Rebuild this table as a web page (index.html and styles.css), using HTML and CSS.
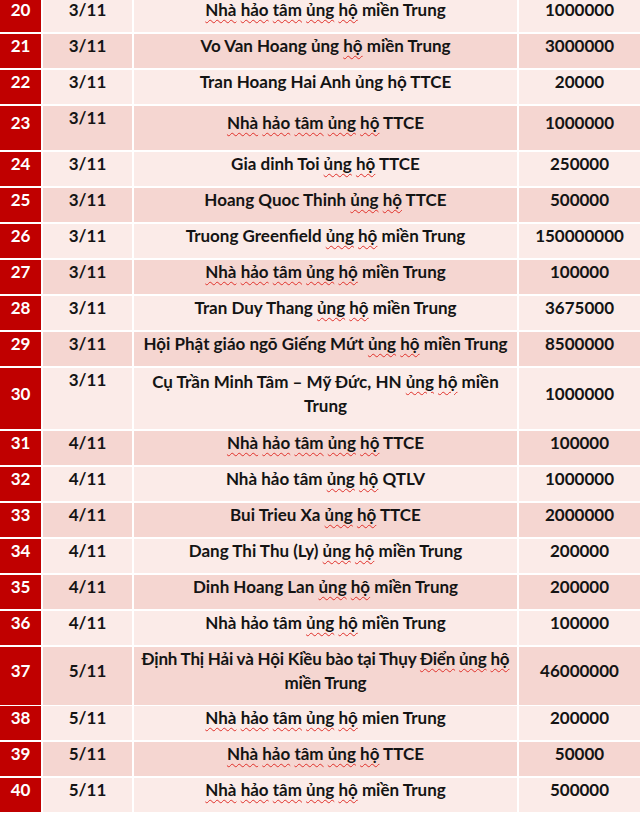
FILE: index.html
```html
<!DOCTYPE html>
<html lang="vi">
<head>
<meta charset="utf-8">
<title>Danh sách ủng hộ</title>
<link rel="stylesheet" href="styles.css">
</head>
<body>
<div class="table">
  <div class="row light"><div class="c no">20</div><div class="c">3/11</div><div class="c"><span><u>Nhà</u> <u>hảo</u> <u>tâm</u> <u>ủng</u> <u>hộ</u> miền Trung</span></div><div class="c">1000000</div></div>
  <div class="row dark"><div class="c no">21</div><div class="c">3/11</div><div class="c"><span>Vo Van Hoang ủng <u>hộ</u> miền Trung</span></div><div class="c">3000000</div></div>
  <div class="row light"><div class="c no">22</div><div class="c">3/11</div><div class="c"><span>Tran Hoang Hai Anh ủng hộ TTCE</span></div><div class="c">20000</div></div>
  <div class="row dark h44"><div class="c no">23</div><div class="c top">3/11</div><div class="c"><span><u>Nhà</u> <u>hảo</u> <u>tâm</u> <u>ủng</u> <u>hộ</u> TTCE</span></div><div class="c">1000000</div></div>
  <div class="row light"><div class="c no">24</div><div class="c">3/11</div><div class="c"><span>Gia dinh Toi <u>ủng</u> <u>hộ</u> TTCE</span></div><div class="c">250000</div></div>
  <div class="row dark"><div class="c no">25</div><div class="c">3/11</div><div class="c"><span>Hoang Quoc Thinh <u>ủng</u> <u>hộ</u> TTCE</span></div><div class="c">500000</div></div>
  <div class="row light"><div class="c no">26</div><div class="c">3/11</div><div class="c"><span>Truong Greenfield <u>ủng</u> <u>hộ</u> miền Trung</span></div><div class="c">150000000</div></div>
  <div class="row dark"><div class="c no">27</div><div class="c">3/11</div><div class="c"><span><u>Nhà</u> <u>hảo</u> <u>tâm</u> <u>ủng</u> <u>hộ</u> miền Trung</span></div><div class="c">100000</div></div>
  <div class="row light"><div class="c no">28</div><div class="c">3/11</div><div class="c"><span>Tran Duy Thang <u>ủng</u> <u>hộ</u> miền Trung</span></div><div class="c">3675000</div></div>
  <div class="row dark"><div class="c no">29</div><div class="c">3/11</div><div class="c"><span>Hội Phật giáo ngõ Giếng Mứt <u>ủng</u> <u>hộ</u> miền Trung</span></div><div class="c">8500000</div></div>
  <div class="row light h61"><div class="c no">30</div><div class="c top">3/11</div><div class="c"><span>Cụ Trần Minh Tâm – Mỹ Đức, HN <u>ủng</u> <u>hộ</u> miền<br>Trung</span></div><div class="c">1000000</div></div>
  <div class="row dark"><div class="c no">31</div><div class="c">4/11</div><div class="c"><span><u>Nhà</u> <u>hảo</u> <u>tâm</u> <u>ủng</u> <u>hộ</u> TTCE</span></div><div class="c">100000</div></div>
  <div class="row light"><div class="c no">32</div><div class="c">4/11</div><div class="c"><span>Nhà hảo tâm <u>ủng</u> <u>hộ</u> QTLV</span></div><div class="c">1000000</div></div>
  <div class="row dark"><div class="c no">33</div><div class="c">4/11</div><div class="c"><span>Bui Trieu Xa <u>ủng</u> <u>hộ</u> TTCE</span></div><div class="c">2000000</div></div>
  <div class="row light"><div class="c no">34</div><div class="c">4/11</div><div class="c"><span>Dang Thi Thu (Ly) <u>ủng</u> <u>hộ</u> miền Trung</span></div><div class="c">200000</div></div>
  <div class="row dark"><div class="c no">35</div><div class="c">4/11</div><div class="c"><span>Dinh Hoang Lan <u>ủng</u> <u>hộ</u> miền Trung</span></div><div class="c">200000</div></div>
  <div class="row light"><div class="c no">36</div><div class="c">4/11</div><div class="c"><span>Nhà hảo tâm <u>ủng</u> <u>hộ</u> miền Trung</span></div><div class="c">100000</div></div>
  <div class="row dark h57"><div class="c no">37</div><div class="c">5/11</div><div class="c"><span class="tight">Định Thị Hải và Hội Kiều bào tại Thụy <u>Điển</u> <u>ủng</u> <u>hộ</u><br>miền Trung</span></div><div class="c">46000000</div></div>
  <div class="row light"><div class="c no">38</div><div class="c">5/11</div><div class="c"><span><u>Nhà</u> <u>hảo</u> <u>tâm</u> <u>ủng</u> <u>hộ</u> mien Trung</span></div><div class="c">200000</div></div>
  <div class="row dark"><div class="c no">39</div><div class="c">5/11</div><div class="c"><span><u>Nhà</u> <u>hảo</u> <u>tâm</u> <u>ủng</u> <u>hộ</u> TTCE</span></div><div class="c">50000</div></div>
  <div class="row light"><div class="c no">40</div><div class="c">5/11</div><div class="c"><span><u>Nhà</u> <u>hảo</u> <u>tâm</u> <u>ủng</u> <u>hộ</u> miền Trung</span></div><div class="c">500000</div></div>
</div>
</body>
</html>
```

FILE: styles.css
```css
html, body {
  margin: 0;
  padding: 0;
  background: #ffffff;
}
body {
  font-family: Lato, "Open Sans", "Liberation Sans", sans-serif;
  font-weight: 700;
  font-size: 17px;
  color: #141414;
  width: 640px;
  overflow: hidden;
}
.table {
  margin-top: -2px;
  display: flex;
  flex-direction: column;
  gap: 2px;
}
.row {
  display: grid;
  grid-template-columns: 41px 89px 383px 121px;
  column-gap: 2px;
  height: 34px;
}
.row.h44 { height: 44px; }
.row.h61 { height: 61px; }
.row.h57 { height: 57px; }
.c {
  display: flex;
  flex-direction: column;
  justify-content: center;
  align-items: center;
  text-align: center;
  padding: 0 2px 10px;
  line-height: 24px;
  box-sizing: border-box;
  white-space: nowrap;
}
.c.top { justify-content: flex-start; }
.tight { letter-spacing: -0.2px; }
.light .c { background: #fbebe8; }
.dark .c { background: #f5d6d1; }
.row .c.no {
  background: #c00000;
  color: #ffffff;
}
u {
  text-decoration: underline wavy #e0302a;
  text-decoration-thickness: 1px;
  text-underline-offset: 3px;
}
```
